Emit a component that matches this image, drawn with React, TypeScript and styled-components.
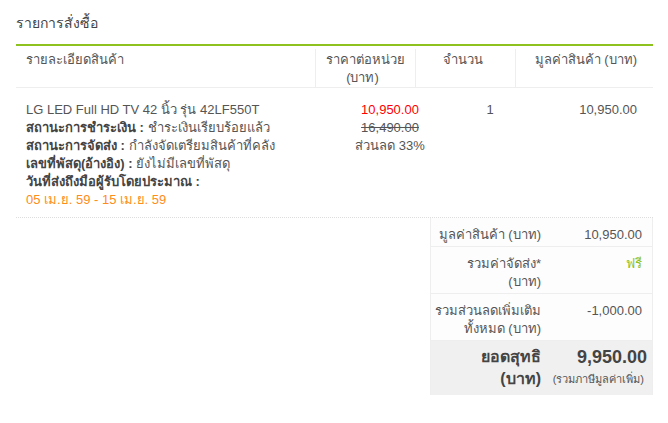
import React from "react";
import styled, { createGlobalStyle } from "styled-components";

const GlobalStyle = createGlobalStyle`
  body {
    margin: 0;
    background: #fff;
    font-family: "Liberation Sans", "Noto Sans", sans-serif;
    font-size: 13px;
    color: #555;
  }
`;

const Page = styled.div`
  padding: 0 15px 0 16px;
  width: 637px;
`;

const Title = styled.h2`
  margin: 0;
  padding-top: 3px;
  height: 41px;
  line-height: 40px;
  font-size: 14px;
  font-weight: normal;
  color: #444;
`;

const HeaderRow = styled.div`
  display: grid;
  grid-template-columns: 299px 100px 100px 1fr;
  border-top: 2px solid #8dc21f;
  border-bottom: 1px solid #eee;
  padding: 3px 0 0;
`;

const HeadCell = styled.div<{ $align: "left" | "center" | "right"; $first?: boolean }>`
  line-height: 18px;
  padding: 2px 16px 0 10px;
  height: 38px;
  box-sizing: border-box;
  text-align: ${(p) => p.$align};
  border-left: ${(p) => (p.$first ? "none" : "1px solid #eee")};
  white-space: nowrap;
`;

const BodyRow = styled.div`
  display: grid;
  grid-template-columns: 319px 100px 100px 1fr;
  padding: 13px 0 8px;
  border-bottom: 1px dotted #ddd;
  line-height: 18px;
`;

const Cell = styled.div<{ $align: "left" | "center" | "right" }>`
  text-align: ${(p) => p.$align};
  padding: ${(p) => (p.$align === "right" ? "0 16px 0 0" : "0 0 0 10px")};
`;

const Line = styled.div`
  white-space: nowrap;
`;

const Label = styled.b`
  color: #444;
`;

const Price = styled.div<{ $tone: "sale" | "old" | "plain" }>`
  color: ${(p) => (p.$tone === "sale" ? "#f00" : "#555")};
  text-decoration: ${(p) => (p.$tone === "old" ? "line-through" : "none")};
`;

const DateText = styled.div`
  color: #ff8c1a;
`;

const SummaryWrap = styled.div`
  display: flex;
  justify-content: flex-end;
`;

const Summary = styled.div`
  width: 221px;
  border-left: 1px solid #eee;
  border-right: 1px solid #eee;
  background: #fdfdfd;
`;

const SumRow = styled.div<{ $total?: boolean }>`
  display: grid;
  grid-template-columns: 120px 1fr;
  border-bottom: 1px solid ${(p) => (p.$total ? "#f0f0f0" : "#eee")};
  background: ${(p) => (p.$total ? "#f0f0f0" : "transparent")};
  padding: ${(p) => (p.$total ? "5px 0 4px" : "8px 0 2px")};
  line-height: 18px;
`;

const SumLabel = styled.div<{ $total?: boolean }>`
  text-align: right;
  padding: 0 10px 0 4px;
  white-space: nowrap;
  font-size: ${(p) => (p.$total ? "16px" : "13px")};
  font-weight: ${(p) => (p.$total ? "bold" : "normal")};
  line-height: ${(p) => (p.$total ? "22px" : "18px")};
  color: ${(p) => (p.$total ? "#444" : "#555")};
`;

const SumValue = styled.div<{ $free?: boolean }>`
  text-align: right;
  padding-right: 10px;
  color: ${(p) => (p.$free ? "#8dc21f" : "#555")};
`;

const TotalValue = styled.div`
  text-align: right;
  padding-right: 5px;
  font-size: 18px;
  font-weight: bold;
  line-height: 22px;
  color: #444;
`;

const VatNote = styled.div`
  text-align: right;
  padding-right: 8px;
  font-size: 11px;
  line-height: 22px;
  white-space: nowrap;
`;

export default function App() {
  return (
    <Page>
      <GlobalStyle />
      <Title>รายการสั่งซื้อ</Title>
      <HeaderRow>
        <HeadCell $align="left" $first>
          รายละเอียดสินค้า
        </HeadCell>
        <HeadCell $align="center">
          ราคาต่อหน่วย
          <br />
          (บาท)
        </HeadCell>
        <HeadCell $align="center">จำนวน</HeadCell>
        <HeadCell $align="right">มูลค่าสินค้า (บาท)</HeadCell>
      </HeaderRow>
      <BodyRow>
        <Cell $align="left">
          <Line>LG LED Full HD TV 42 นิ้ว รุ่น 42LF550T</Line>
          <Line>
            <Label>สถานะการชำระเงิน :</Label> ชำระเงินเรียบร้อยแล้ว
          </Line>
          <Line>
            <Label>สถานะการจัดส่ง :</Label> กำลังจัดเตรียมสินค้าที่คลัง
          </Line>
          <Line>
            <Label>เลขที่พัสดุ(อ้างอิง) :</Label> ยังไม่มีเลขที่พัสดุ
          </Line>
          <Line>
            <Label>วันที่ส่งถึงมือผู้รับโดยประมาณ :</Label>
          </Line>
          <DateText>05 เม.ย. 59 - 15 เม.ย. 59</DateText>
        </Cell>
        <Cell $align="center">
          <Price $tone="sale">10,950.00</Price>
          <Price $tone="old">16,490.00</Price>
          <Price $tone="plain">ส่วนลด 33%</Price>
        </Cell>
        <Cell $align="center">1</Cell>
        <Cell $align="right">10,950.00</Cell>
      </BodyRow>
      <SummaryWrap>
        <Summary>
          <SumRow>
            <SumLabel>มูลค่าสินค้า (บาท)</SumLabel>
            <SumValue>10,950.00</SumValue>
          </SumRow>
          <SumRow>
            <SumLabel>
              รวมค่าจัดส่ง*
              <br />
              (บาท)
            </SumLabel>
            <SumValue $free>ฟรี</SumValue>
          </SumRow>
          <SumRow>
            <SumLabel>
              รวมส่วนลดเพิ่มเติม
              <br />
              ทั้งหมด (บาท)
            </SumLabel>
            <SumValue>-1,000.00</SumValue>
          </SumRow>
          <SumRow $total>
            <SumLabel $total>
              ยอดสุทธิ
              <br />
              (บาท)
            </SumLabel>
            <div>
              <TotalValue>9,950.00</TotalValue>
              <VatNote>(รวมภาษีมูลค่าเพิ่ม)</VatNote>
            </div>
          </SumRow>
        </Summary>
      </SummaryWrap>
    </Page>
  );
}
